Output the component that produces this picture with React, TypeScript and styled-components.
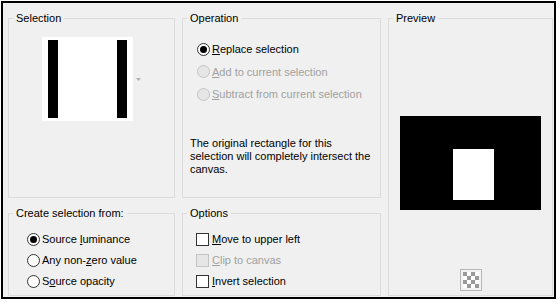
import React from "react";
import styled, { createGlobalStyle } from "styled-components";

const Global = createGlobalStyle`
  html, body { margin: 0; padding: 0; background: #fff; }
  body {
    font-family: "Liberation Sans", Arial, sans-serif;
    font-size: 11px;
    color: #000;
  }
`;

const Frame = styled.div`
  box-sizing: border-box;
  margin: 1px 0 0 1px;
  width: 555px;
  height: 298px;
  border: 2px solid #000;
  background: #f0f0f0;
  padding: 9px 0 1px 5px;
  display: grid;
  grid-template-columns: 167px 199px 165px;
  grid-template-rows: 186px 89px;
  column-gap: 7px;
  row-gap: 9px;
`;

const Group = styled.fieldset<{ $col: number; $row: string }>`
  margin: 0;
  padding: 0 4px;
  border: 1px solid #dcdcdc;
  min-width: 0;
  box-sizing: border-box;
  display: flex;
  flex-direction: column;
  grid-column: ${(p) => p.$col};
  grid-row: ${(p) => p.$row};
`;

const Legend = styled.legend`
  padding: 0 3px;
  font-size: 11px;
  line-height: 13px;
`;

const SelectRow = styled.div`
  display: flex;
  align-items: center;
  justify-content: center;
  margin-top: 12px;
`;

const Thumb = styled.div`
  width: 91px;
  height: 84px;
  box-sizing: border-box;
  background: #fff;
  padding: 3px 6px;
  display: flex;
  justify-content: space-between;
`;

const Bar = styled.div`
  width: 10px;
  background: #000;
`;

const Caret = styled.svg`
  margin-left: 3px;
  flex: none;
`;

const OptionList = styled.div<{ $top: number; $left: number }>`
  display: flex;
  flex-direction: column;
  padding-top: ${(p) => p.$top}px;
  padding-left: ${(p) => p.$left}px;
`;

const OptionRow = styled.div<{ $h: number; $disabled?: boolean }>`
  display: flex;
  align-items: center;
  height: ${(p) => p.$h}px;
  white-space: nowrap;
  color: ${(p) => (p.$disabled ? "#a0a0a0" : "#000")};
`;

const RadioCircle = styled.span<{ $checked?: boolean; $disabled?: boolean }>`
  width: 13px;
  height: 13px;
  box-sizing: border-box;
  border-radius: 50%;
  border: 1px solid ${(p) => (p.$disabled ? "#c4c4c4" : "#333")};
  background: ${(p) => (p.$disabled ? "#e6e6e6" : "#fff")};
  display: flex;
  align-items: center;
  justify-content: center;
  flex: none;
  margin-right: 2px;
  &::after {
    content: "";
    width: 7px;
    height: 7px;
    border-radius: 50%;
    background: #000;
    display: ${(p) => (p.$checked ? "block" : "none")};
  }
`;

const CheckBox = styled.span<{ $disabled?: boolean }>`
  width: 13px;
  height: 13px;
  box-sizing: border-box;
  border: 1px solid ${(p) => (p.$disabled ? "#c4c4c4" : "#333")};
  background: ${(p) => (p.$disabled ? "#e6e6e6" : "#fff")};
  flex: none;
  margin-right: 3px;
`;

const Note = styled.p`
  margin: 31px 0 0 3px;
  max-width: 186px;
  line-height: 13px;
`;

const PreviewBody = styled.div`
  flex: 1;
  display: flex;
  flex-direction: column;
  align-items: center;
  padding-bottom: 4px;
`;

const Canvas = styled.div`
  margin-top: 91px;
  width: 141px;
  height: 94px;
  box-sizing: border-box;
  background: #000;
  padding: 33px 0 0 53px;
`;

const CanvasSel = styled.div`
  width: 41px;
  height: 51px;
  background: #fff;
`;

const Spacer = styled.div`
  flex: 1;
`;

const U = styled.span`
  text-decoration: underline;
  text-underline-offset: 1px;
`;

type Opt = { pre?: string; key: string; post: string; checked?: boolean; disabled?: boolean };

const Radios = ({ items, h, top, left }: { items: Opt[]; h: number; top: number; left: number }) => (
  <OptionList $top={top} $left={left}>
    {items.map((o, i) => (
      <OptionRow key={i} $h={h} $disabled={o.disabled}>
        <RadioCircle $checked={o.checked} $disabled={o.disabled} />
        <span>
          {o.pre}
          <U>{o.key}</U>
          {o.post}
        </span>
      </OptionRow>
    ))}
  </OptionList>
);

const Checks = ({ items, h, top, left }: { items: Opt[]; h: number; top: number; left: number }) => (
  <OptionList $top={top} $left={left}>
    {items.map((o, i) => (
      <OptionRow key={i} $h={h} $disabled={o.disabled}>
        <CheckBox $disabled={o.disabled} />
        <span>
          {o.pre}
          <U>{o.key}</U>
          {o.post}
        </span>
      </OptionRow>
    ))}
  </OptionList>
);

const CheckerIcon = () => (
  <svg width="22" height="22" viewBox="0 0 22 22">
    <rect x="0.5" y="0.5" width="21" height="21" fill="#f2f2f2" stroke="#b8b8b8" />
    <rect x="3" y="3" width="16" height="16" fill="#ffffff" />
    {Array.from({ length: 16 }).map((_, i) => {
      const r = Math.floor(i / 4);
      const c = i % 4;
      return (r + c) % 2 === 0 ? (
        <rect key={i} x={3 + c * 4} y={3 + r * 4} width="4" height="4" fill="#999999" />
      ) : null;
    })}
  </svg>
);

export default function App() {
  return (
    <>
      <Global />
      <Frame>
        <Group $col={1} $row="1">
          <Legend>Selection</Legend>
          <SelectRow>
            <Thumb>
              <Bar />
              <Bar />
            </Thumb>
            <Caret width="5" height="3" viewBox="0 0 5 3">
              <path d="M0 0 L2.5 3 L5 0 Z" fill="#b0b0b0" />
            </Caret>
          </SelectRow>
        </Group>
        <Group $col={2} $row="1">
          <Legend>Operation</Legend>
          <Radios
            h={22.5}
            top={13}
            left={10}
            items={[
              { key: "R", post: "eplace selection", checked: true },
              { key: "A", post: "dd to current selection", disabled: true },
              { key: "S", post: "ubtract from current selection", disabled: true },
            ]}
          />
          <Note>The original rectangle for this selection will completely intersect the canvas.</Note>
        </Group>
        <Group $col={3} $row="1 / span 2">
          <Legend>Preview</Legend>
          <PreviewBody>
            <Canvas>
              <CanvasSel />
            </Canvas>
            <Spacer />
            <CheckerIcon />
          </PreviewBody>
        </Group>
        <Group $col={1} $row="2">
          <Legend>Create selection from:</Legend>
          <Radios
            h={21}
            top={8.5}
            left={14}
            items={[
              { pre: "Source ", key: "l", post: "uminance", checked: true },
              { pre: "Any non-", key: "z", post: "ero value" },
              { pre: "S", key: "o", post: "urce opacity" },
            ]}
          />
        </Group>
        <Group $col={2} $row="2">
          <Legend>Options</Legend>
          <Checks
            h={21}
            top={8.5}
            left={9}
            items={[
              { key: "M", post: "ove to upper left" },
              { key: "C", post: "lip to canvas", disabled: true },
              { key: "I", post: "nvert selection" },
            ]}
          />
        </Group>
      </Frame>
    </>
  );
}
